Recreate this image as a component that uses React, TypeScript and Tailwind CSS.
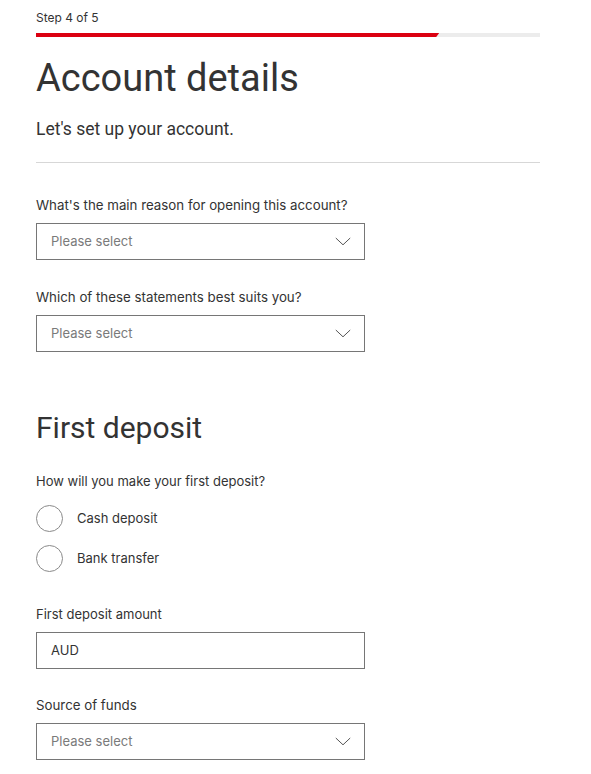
import { useState } from "react";

const heading = "font-['Roboto',sans-serif] font-normal text-[#333]";
const body = "font-['Inter',sans-serif] text-[#333]";

function Chevron() {
  return (
    <svg width="16" height="9" viewBox="0 0 16 9" fill="none" className="shrink-0">
      <path d="M0.8 1 L8 7.8 L15.2 1" stroke="#555" strokeWidth="1" />
    </svg>
  );
}

function SelectField({ label }: { label: string }) {
  return (
    <div>
      <label className={`${body} block text-[13.3px] leading-4`}>{label}</label>
      <button className="mt-[10px] flex h-[37px] w-[329px] items-center justify-between border border-[#767676] bg-white pl-[14px] pr-[13px]">
        <span className="font-['Inter',sans-serif] text-[13px] text-[#7a7a7a]">Please select</span>
        <Chevron />
      </button>
    </div>
  );
}

function Radio({ label, checked, onClick }: { label: string; checked: boolean; onClick: () => void }) {
  return (
    <button onClick={onClick} className="flex h-[27px] items-center gap-[14px]">
      <span className="flex h-[27px] w-[27px] items-center justify-center rounded-full border border-[#8a8a8a] bg-white">
        {checked && <span className="h-[13px] w-[13px] rounded-full bg-[#333]" />}
      </span>
      <span className={`${body} text-[13px]`}>{label}</span>
    </button>
  );
}

export default function App() {
  const [deposit, setDeposit] = useState<string | null>(null);

  return (
    <div className="min-h-screen bg-white px-9">
      <div className="w-[504px]">
        {/* Progress */}
        <div className="pt-[10px]">
          <p className={`${body} text-[12px] leading-4`}>Step 4 of 5</p>
          <div className="mt-[7px] h-1 w-full bg-[#ececec]">
            <div className="h-1 w-[80%] bg-[#db0011] [clip-path:polygon(0_0,100%_0,calc(100%-3px)_100%,0_100%)]" />
          </div>
        </div>

        <h1 className={`${heading} mt-[18px] text-[38px] leading-[46px]`}>Account details</h1>
        <p className={`${heading} mt-[16px] text-[17.5px] leading-6`}>Let's set up your account.</p>

        <div className="mt-[21px] h-px w-full bg-[#d7d7d7]" />

        <div className="mt-[34px]">
          <SelectField label="What's the main reason for opening this account?" />
        </div>
        <div className="mt-[29px]">
          <SelectField label="Which of these statements best suits you?" />
        </div>

        <h2 className={`${heading} mt-[58px] text-[30px] leading-9`}>First deposit</h2>

        <p className={`${body} mt-[27px] text-[13px] leading-4`}>How will you make your first deposit?</p>
        <div className="mt-[16px] flex flex-col items-start gap-[13px]">
          <Radio label="Cash deposit" checked={deposit === "cash"} onClick={() => setDeposit("cash")} />
          <Radio label="Bank transfer" checked={deposit === "bank"} onClick={() => setDeposit("bank")} />
        </div>

        <div className="mt-[34px]">
          <label className={`${body} block text-[13px] leading-4`}>First deposit amount</label>
          <div className="mt-[10px] flex h-[37px] w-[329px] items-center border border-[#767676] bg-white pl-[14px]">
            <span className={`${body} text-[13px]`}>AUD</span>
          </div>
        </div>

        <div className="mt-[28px] pb-4">
          <SelectField label="Source of funds" />
        </div>
      </div>
    </div>
  );
}
